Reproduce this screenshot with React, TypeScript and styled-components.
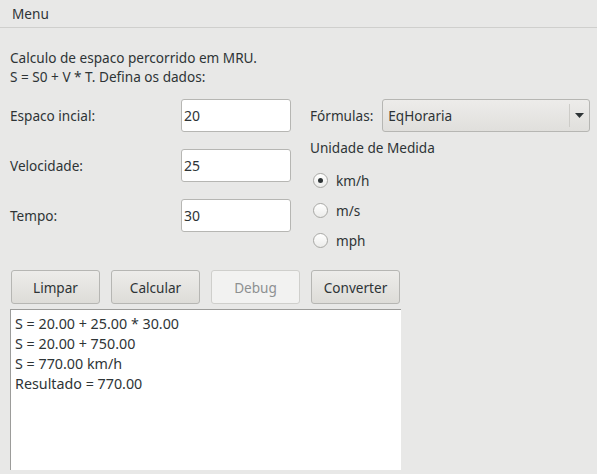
import React from "react";
import styled, { createGlobalStyle } from "styled-components";

const Global = createGlobalStyle`
  html, body { margin: 0; padding: 0; background: #e8e8e7; }
  body {
    font-family: "Noto Sans", "DejaVu Sans", sans-serif;
    font-size: 13.6px;
    color: #2e3436;
    width: 597px;
    height: 474px;
    overflow: hidden;
  }
`;

const Window = styled.div`
  width: 597px;
  height: 474px;
  display: flex;
  flex-direction: column;
  background: #e8e8e7;
`;

const MenuBar = styled.div`
  box-sizing: border-box;
  height: 28px;
  border-bottom: 1px solid #cfcfcd;
  display: flex;
  align-items: center;
  padding-left: 12px;
`;

const Body = styled.div`
  padding: 20px 0 0 10px;
  display: flex;
  flex-direction: column;
`;

const Description = styled.div`
  line-height: 19px;
  margin-bottom: 13px;
`;

const FormArea = styled.div`
  display: grid;
  grid-template-columns: 300px 287px;
`;

const LeftCol = styled.div`
  display: flex;
  flex-direction: column;
  gap: 17px;
`;

const FieldRow = styled.div`
  display: grid;
  grid-template-columns: 171px 110px;
  align-items: center;
  height: 33px;
`;

const Label = styled.span`
  line-height: 19px;
`;

const TextInput = styled.input`
  box-sizing: border-box;
  width: 110px;
  height: 33px;
  border: 1px solid #b6b6b3;
  border-radius: 3px;
  background: #ffffff;
  padding: 0 0 0 2px;
  font: inherit;
  font-size: 14px;
  color: #2e3436;
  outline: none;
`;

const RightCol = styled.div`
  display: flex;
  flex-direction: column;
`;

const ComboRow = styled.div`
  display: flex;
  align-items: center;
  height: 33px;
  gap: 9px;
`;

const Combo = styled.div`
  box-sizing: border-box;
  width: 208px;
  height: 33px;
  border: 1px solid #b6b6b3;
  border-radius: 3px;
  background: linear-gradient(#edecea, #e0dfdc);
  display: flex;
  align-items: center;
  padding-left: 5px;
`;

const ComboText = styled.span`
  flex: 1;
`;

const ComboSep = styled.div`
  width: 1px;
  height: 23px;
  background: #cdccc8;
`;

const ComboArrow = styled.div`
  width: 19px;
  display: flex;
  justify-content: center;
  align-items: center;
`;

const GroupTitle = styled.div`
  line-height: 19px;
  margin-top: 6px;
`;

const RadioList = styled.div`
  display: flex;
  flex-direction: column;
  margin-top: 8px;
`;

const RadioRow = styled.div`
  display: flex;
  align-items: center;
  height: 30px;
  gap: 8px;
  padding-left: 3px;
`;

const RadioCircle = styled.span<{ $checked?: boolean }>`
  box-sizing: border-box;
  width: 15px;
  height: 15px;
  border-radius: 50%;
  border: 1px solid #a8a8a5;
  background: linear-gradient(#ffffff, #ececea);
  display: flex;
  align-items: center;
  justify-content: center;
  &::after {
    content: "";
    width: 5px;
    height: 5px;
    border-radius: 50%;
    background: #2e3436;
    display: ${(p) => (p.$checked ? "block" : "none")};
  }
`;

const ButtonRow = styled.div`
  display: flex;
  gap: 11px;
  margin-top: 15px;
  padding-left: 1px;
`;

const Button = styled.div<{ $disabled?: boolean }>`
  box-sizing: border-box;
  width: 89px;
  height: 34px;
  border: 1px solid ${(p) => (p.$disabled ? "#cfcfcc" : "#b6b6b3")};
  border-radius: 3px;
  background: ${(p) =>
    p.$disabled ? "#f2f2f1" : "linear-gradient(#edecea, #dddcd8)"};
  color: ${(p) => (p.$disabled ? "#8d9091" : "#2e3436")};
  display: flex;
  align-items: center;
  justify-content: center;
`;

const Output = styled.div`
  box-sizing: border-box;
  margin-top: 5px;
  width: 391px;
  height: 161px;
  background: #ffffff;
  border-top: 1px solid #9c9c9a;
  border-left: 1px solid #9c9c9a;
  padding: 4px 0 0 4px;
  font-size: 14.3px;
  line-height: 20px;
`;

const Arrow = () => (
  <svg width="9" height="5" viewBox="0 0 9 5">
    <polygon points="0,0 9,0 4.5,5" fill="#2e3436" />
  </svg>
);

export default function App() {
  const fields = [
    ["Espaco incial:", "20"],
    ["Velocidade:", "25"],
    ["Tempo:", "30"],
  ];
  const units = ["km/h", "m/s", "mph"];
  return (
    <Window>
      <Global />
      <MenuBar>Menu</MenuBar>
      <Body>
        <Description>
          Calculo de espaco percorrido em MRU.
          <br />
          S = S0 + V * T. Defina os dados:
        </Description>
        <FormArea>
          <LeftCol>
            {fields.map(([l, v]) => (
              <FieldRow key={l}>
                <Label>{l}</Label>
                <TextInput defaultValue={v} />
              </FieldRow>
            ))}
          </LeftCol>
          <RightCol>
            <ComboRow>
              <Label>Fórmulas:</Label>
              <Combo>
                <ComboText>EqHoraria</ComboText>
                <ComboSep />
                <ComboArrow>
                  <Arrow />
                </ComboArrow>
              </Combo>
            </ComboRow>
            <GroupTitle>Unidade de Medida</GroupTitle>
            <RadioList>
              {units.map((u, i) => (
                <RadioRow key={u}>
                  <RadioCircle $checked={i === 0} />
                  <span>{u}</span>
                </RadioRow>
              ))}
            </RadioList>
          </RightCol>
        </FormArea>
        <ButtonRow>
          <Button>Limpar</Button>
          <Button>Calcular</Button>
          <Button $disabled>Debug</Button>
          <Button>Converter</Button>
        </ButtonRow>
        <Output>
          S = 20.00 + 25.00 * 30.00
          <br />
          S = 20.00 + 750.00
          <br />
          S = 770.00 km/h
          <br />
          Resultado = 770.00
        </Output>
      </Body>
    </Window>
  );
}
